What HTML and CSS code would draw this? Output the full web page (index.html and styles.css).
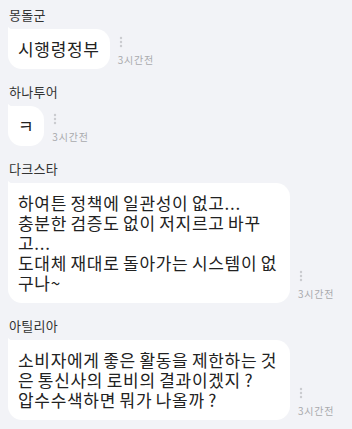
FILE: index.html
```html
<!DOCTYPE html>
<html>
	<head>
		<meta charset="utf-8">
		<title>댓글</title>
		<link rel="stylesheet" href="styles.css">
	</head>
	<body>
		<div class="list">
			<div class="msg">
				<div class="name">몽돌군</div>
				<div class="row">
					<div class="bubble">시행령정부</div>
					<div class="meta">
						<svg class="kebab" width="4" height="12" viewBox="0 0 4 12"><circle cx="2" cy="2" r="1.2"/><circle cx="2" cy="6" r="1.2"/><circle cx="2" cy="10" r="1.2"/></svg>
						<span class="time">3시간전</span>
					</div>
				</div>
			</div>

			<div class="msg">
				<div class="name">하나투어</div>
				<div class="row">
					<div class="bubble">ㅋ</div>
					<div class="meta">
						<svg class="kebab" width="4" height="12" viewBox="0 0 4 12"><circle cx="2" cy="2" r="1.2"/><circle cx="2" cy="6" r="1.2"/><circle cx="2" cy="10" r="1.2"/></svg>
						<span class="time">3시간전</span>
					</div>
				</div>
			</div>

			<div class="msg">
				<div class="name">다크스타</div>
				<div class="row">
					<div class="bubble">하여튼 정책에 일관성이 없고...<br>충분한 검증도 없이 저지르고 바꾸고...<br>도대체 재대로 돌아가는 시스템이 없구나~</div>
					<div class="meta">
						<svg class="kebab" width="4" height="12" viewBox="0 0 4 12"><circle cx="2" cy="2" r="1.2"/><circle cx="2" cy="6" r="1.2"/><circle cx="2" cy="10" r="1.2"/></svg>
						<span class="time">3시간전</span>
					</div>
				</div>
			</div>

			<div class="msg">
				<div class="name">아틸리아</div>
				<div class="row">
					<div class="bubble">소비자에게 좋은 활동을 제한하는 것은 통신사의 로비의 결과이겠지 ?<br>압수수색하면 뭐가 나올까 ?</div>
					<div class="meta">
						<svg class="kebab" width="4" height="12" viewBox="0 0 4 12"><circle cx="2" cy="2" r="1.2"/><circle cx="2" cy="6" r="1.2"/><circle cx="2" cy="10" r="1.2"/></svg>
						<span class="time">3시간전</span>
					</div>
				</div>
			</div>
		</div>
	</body>
</html>
```

FILE: styles.css
```css
html,body{
	margin: 0;
	background: #f2f3f7;
}
body{
	font-family: "Noto Sans CJK KR", "Noto Sans", sans-serif;
	color: #222;
}
.list{
	padding: 6px 8px 0 8px;
}
.msg{
	margin-bottom: 14px;
}
.name{
	font-size: 13px;
	line-height: 18px;
	letter-spacing: 0.3px;
	color: #333;
	margin-bottom: 5px;
	padding-left: 1px;
}
.row{
	display: flex;
	align-items: flex-end;
}
.bubble{
	position: relative;
	background: #fff;
	border-radius: 1px 14px 14px 14px;
	padding: 10px;
	font-size: 17px;
	line-height: 20px;
	letter-spacing: 0.7px;
	word-spacing: -1px;
	max-width: 262px;
}
.bubble::before{
	content: '';
	position: absolute;
	left: 0;
	top: -2px;
	width: 4px;
	height: 3px;
	background: #fff;
	clip-path: polygon(0 0,100% 100%,0 100%);
}
.meta{
	display: flex;
	flex-direction: column;
	align-items: flex-start;
	margin-left: 8px;
	padding-bottom: 3px;
}
.kebab{
	fill: #cacbcf;
	margin-left: 1px;
	margin-bottom: 5px;
}
.time{
	font-size: 10px;
	line-height: 13px;
	letter-spacing: 0.8px;
	color: #a9aaad;
}
```
